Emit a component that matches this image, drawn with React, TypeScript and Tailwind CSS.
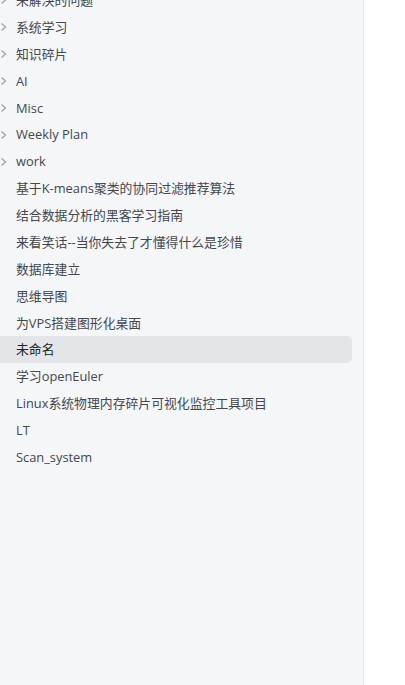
import React from "react";

const items: { t: string; folder?: boolean; active?: boolean }[] = [
  { t: "未解决的问题", folder: true },
  { t: "系统学习", folder: true },
  { t: "知识碎片", folder: true },
  { t: "AI", folder: true },
  { t: "Misc", folder: true },
  { t: "Weekly Plan", folder: true },
  { t: "work", folder: true },
  { t: "基于K-means聚类的协同过滤推荐算法" },
  { t: "结合数据分析的黑客学习指南" },
  { t: "来看笑话--当你失去了才懂得什么是珍惜" },
  { t: "数据库建立" },
  { t: "思维导图" },
  { t: "为VPS搭建图形化桌面" },
  { t: "未命名", active: true },
  { t: "学习openEuler" },
  { t: "Linux系统物理内存碎片可视化监控工具项目" },
  { t: "LT" },
  { t: "Scan_system" },
];

function Chevron() {
  return (
    <svg width="8" height="10" viewBox="0 0 8 10" className="absolute left-[0px] top-1/2 -translate-y-1/2">
      <path d="M1.5 1.5 L5.5 5 L1.5 8.5" fill="none" stroke="#a3a6ab" strokeWidth="1.4" />
    </svg>
  );
}

export default function App() {
  return (
    <div
      className="flex h-[685px] w-[405px] overflow-hidden bg-white"
      style={{ fontFamily: '"Segoe UI", "Open Sans", "Noto Sans CJK SC", sans-serif' }}
    >
      <div className="w-[364px] shrink-0 border-r border-[#e4e5e7] bg-[#f5f6f8] pr-[11px]">
        <div className="-mt-[13px] flex flex-col">
          {items.map((it, i) => (
            <div
              key={i}
              className={`relative flex h-[26.875px] items-center rounded-r-[5px] pl-[16px] text-[12.85px] ${
                it.active ? "bg-[#e3e5e8] text-[#222]" : "text-[#44474c]"
              }`}
            >
              {it.folder && <Chevron />}
              <span className="whitespace-nowrap leading-none">{it.t}</span>
            </div>
          ))}
        </div>
      </div>
      <div className="flex-1 bg-white" />
    </div>
  );
}
